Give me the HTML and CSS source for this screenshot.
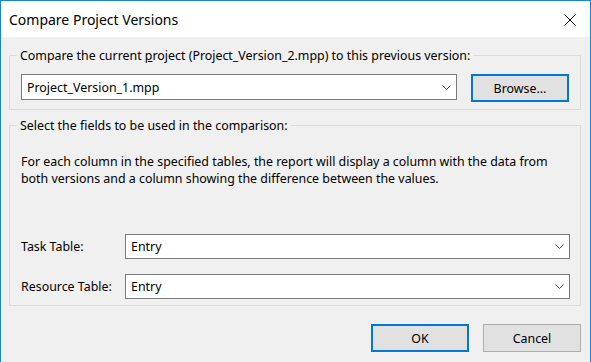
FILE: index.html
```html
<!DOCTYPE html>
<html lang="en">
<head>
  <meta charset="UTF-8">
  <meta name="viewport" content="width=device-width, initial-scale=1.0">
  <title>Compare Project Versions</title>
  <link rel="stylesheet" href="styles.css">
</head>
<body>

  <div class="window">
    <!-- Title Bar -->
    <div class="titlebar">
      <span class="title">Compare Project Versions</span>
      <svg class="close-icon" width="12" height="12" viewBox="0 0 12 12">
        <path d="M0.5 0.5 L11.5 11.5 M11.5 0.5 L0.5 11.5" stroke="#000" stroke-width="1" fill="none"/>
      </svg>
    </div>

    <div class="content">
      <!-- Previous version -->
      <fieldset class="group group-file">
        <legend>Compare the current <u>p</u>roject (Project_Version_2.mpp) to this previous version:</legend>
        <div class="file-row">
          <div class="combo combo-file">
            <span>Project_Version_1.mpp</span>
            <svg class="chevron" width="9" height="5" viewBox="0 0 9 5">
              <path d="M0.5 0.5 L4.5 4.5 L8.5 0.5" stroke="#444" stroke-width="1" fill="none"/>
            </svg>
          </div>
          <button class="btn btn-default">Browse...</button>
        </div>
      </fieldset>

      <!-- Fields -->
      <fieldset class="group group-fields">
        <legend>Select the fields to be used in the comparison:</legend>
        <p class="note">For each column in the specified tables, the report will display a column with the data from<br>both versions and a column showing the difference between the values.</p>
        <div class="field-row">
          <label>Task Table:</label>
          <div class="combo combo-table">
            <span>Entry</span>
            <svg class="chevron" width="9" height="5" viewBox="0 0 9 5">
              <path d="M0.5 0.5 L4.5 4.5 L8.5 0.5" stroke="#444" stroke-width="1" fill="none"/>
            </svg>
          </div>
        </div>
        <div class="field-row">
          <label>Resource Table:</label>
          <div class="combo combo-table">
            <span>Entry</span>
            <svg class="chevron" width="9" height="5" viewBox="0 0 9 5">
              <path d="M0.5 0.5 L4.5 4.5 L8.5 0.5" stroke="#444" stroke-width="1" fill="none"/>
            </svg>
          </div>
        </div>
      </fieldset>

      <!-- Buttons -->
      <div class="actions">
        <button class="btn btn-default">OK</button>
        <button class="btn">Cancel</button>
      </div>
    </div>
  </div>

</body>
</html>
```

FILE: styles.css
```css
body {
  margin: 0;
  font-family: 'Noto Sans', sans-serif;
  font-size: 12.4px;
  color: #000;
  background-color: #f0f0f0;
}
.window {
  width: 591px;
  height: 362px;
  box-sizing: border-box;
  border: 1px solid #1883d7;
  border-bottom: none;
  display: flex;
  flex-direction: column;
  background-color: #f0f0f0;
}
.titlebar {
  height: 36px;
  background-color: #fff;
  display: flex;
  align-items: center;
  justify-content: space-between;
  padding: 0 14px 0 8px;
}
.title {
  font-size: 14px;
  padding-top: 1px;
}
.close-icon {
  display: block;
  margin-top: 2px;
}
.content {
  flex: 1;
  padding: 10px 9px 0 8px;
}
.group {
  margin: 0;
  border: 1px solid #dcdcdc;
  min-width: 0;
}
.group legend {
  line-height: 17px;
  padding: 0 3px;
  margin-left: -4px;
}
.group-file {
  padding: 10px 11px 7px 11px;
}
.file-row {
  display: flex;
  align-items: flex-start;
  gap: 14px;
}
.combo {
  box-sizing: border-box;
  background-color: #fff;
  border: 1px solid #7a7a7a;
  display: flex;
  align-items: center;
  justify-content: space-between;
  padding: 0 5px 0 5px;
}
.combo-file {
  width: 436px;
  height: 26px;
}
.chevron {
  display: block;
}
.btn {
  box-sizing: border-box;
  width: 98px;
  height: 28px;
  font-family: 'Noto Sans', sans-serif;
  font-size: 12.4px;
  color: #000;
  background-color: #e1e1e1;
  border: 1px solid #adadad;
  padding: 0;
  cursor: pointer;
}
.btn-default {
  border: 2px solid #0078d7;
}
.group-fields {
  margin-top: 7px;
  padding: 19px 10px 6px 11px;
}
.note {
  margin: 0 0 47px 0;
  line-height: 17px;
}
.field-row {
  display: flex;
  align-items: center;
}
.field-row + .field-row {
  margin-top: 15px;
}
.field-row label {
  width: 104px;
}
.combo-table {
  flex: 1;
  height: 25px;
}
.actions {
  display: flex;
  justify-content: flex-end;
  gap: 14px;
  margin-top: 18px;
}
```
